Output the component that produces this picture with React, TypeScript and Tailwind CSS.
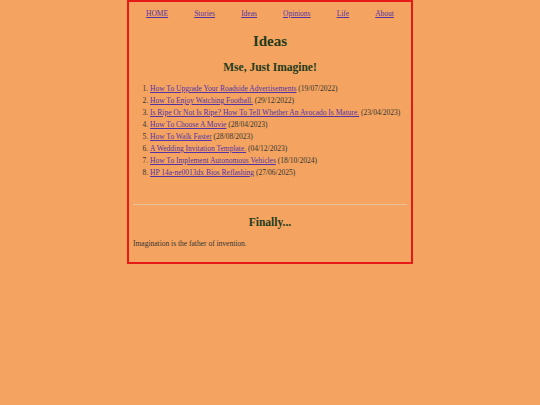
import React from 'react';

const navLinks = ['HOME', 'Stories', 'Ideas', 'Opinions', 'Life', 'About'];

const ideas: { title: string; date: string }[] = [
    { title: 'How To Upgrade Your Roadside Advertisements', date: '19/07/2022' },
    { title: 'How To Enjoy Watching Football.', date: '29/12/2022' },
    { title: 'Is Ripe Or Not Is Ripe? How To Tell Whether An Avocado Is Mature.', date: '23/04/2023' },
    { title: 'How To Choose A Movie', date: '28/04/2023' },
    { title: 'How To Walk Faster', date: '28/08/2023' },
    { title: 'A Wedding Invitation Template.', date: '04/12/2023' },
    { title: 'How To Implement Autonomous Vehicles', date: '18/10/2024' },
    { title: 'HP 14a-ne0013dx Bios Reflashing', date: '27/06/2025' },
];

const App: React.FC = () => {
    return (
        <div className="min-h-screen bg-[#f4a460] font-['Liberation_Serif',serif] text-[#333]">
            <div className="mx-auto w-[286px] border-2 border-[#e41b17] px-[4px] pb-[13px]">
                <nav className="flex justify-around pt-[7px] text-[7.5px] leading-[10px]">
                    {navLinks.map((l) => (
                        <a key={l} href="#" className="text-[#5533a5] underline">
                            {l}
                        </a>
                    ))}
                </nav>

                <h1 className="mt-[13px] text-center text-[15px] font-bold leading-[18px] text-[#1e3b1e]">Ideas</h1>
                <h2 className="mt-[10px] text-center text-[11.5px] font-bold leading-[14px] text-[#1e3b1e]">
                    Mse, Just Imagine!
                </h2>

                <ol className="mt-[9px] list-decimal pl-[17px] text-[7.5px] leading-[12px]">
                    {ideas.map((item) => (
                        <li key={item.title}>
                            <a href="#" className="text-[#5533a5] underline">
                                {item.title}
                            </a>{' '}
                            ({item.date})
                        </li>
                    ))}
                </ol>

                <hr className="mt-[25px] border-0 border-t border-[#e8c09a]" />

                <h2 className="mt-[10px] text-center text-[11.5px] font-bold leading-[14px] text-[#1e3b1e]">Finally...</h2>
                <p className="mt-[10px] text-[7.5px] leading-[10px]">Imagination is the father of invention.</p>
            </div>
        </div>
    );
};

export default App;
